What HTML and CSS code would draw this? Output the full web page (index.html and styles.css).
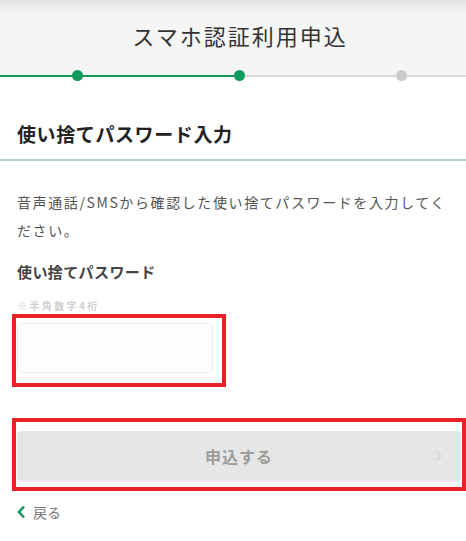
FILE: index.html
```html
<html>
  <head>
    <title>スマホ認証利用申込</title>
    <link rel="stylesheet" href="styles.css">
  </head>
  <body>
    <div class='top'>
      <h1 class='top-title'>スマホ認証利用申込</h1>
    </div>
    <div class='steps'>
      <span class='dot done'></span>
      <span class='dot done'></span>
      <span class='dot'></span>
    </div>

    <h2 class='section-title'>使い捨てパスワード入力</h2>

    <div class='content'>
      <p class='lead'>音声通話/SMSから確認した使い捨てパスワードを入力してください。</p>

      <div class='label'>使い捨てパスワード</div>
      <div class='hint'>※半角数字4桁</div>
      <div class='mark mark-input'>
        <input class='code' type='tel' maxlength='4' />
      </div>

      <div class='mark mark-button'>
        <button class='submit' disabled>
          申込する
          <svg class='submit-arrow' width='8' height='12' viewBox='0 0 8 12'>
            <polyline points='1.5,1.5 6,6 1.5,10.5' fill='none' stroke='#d2d2d2' stroke-width='1.4' />
          </svg>
        </button>
      </div>

      <a class='back' href='#'>
        <svg width='9' height='14' viewBox='0 0 9 14'>
          <polyline points='7,1.5 2,7 7,12.5' fill='none' stroke='#15995e' stroke-width='2.6' />
        </svg>
        戻る
      </a>
    </div>
  </body>
</html>
```

FILE: styles.css
```css
html {
  font-family: 'Noto Sans CJK JP', 'Noto Sans', sans-serif;
  background-color: #fff;
  color: #222;
}

body {
  margin: 0;
  overflow-x: hidden;
}

.top {
  height: 75px;
  background: linear-gradient(#e2e2e2, #f5f5f5 14px);
}

.top-title {
  margin: 0;
  padding-left: 14px;
  height: 70px;
  line-height: 70px;
  text-align: center;
  font-size: 22px;
  font-weight: 400;
  letter-spacing: 2px;
  color: #333;
}

.steps {
  position: relative;
  display: flex;
  gap: 151px;
  height: 11px;
  margin-top: -5px;
  padding-left: 72px;
}

.steps::before {
  content: '';
  position: absolute;
  left: 0;
  right: 0;
  top: 5px;
  height: 2px;
  background: linear-gradient(to right, #19995f 240px, #d8d8d8 240px);
}

.dot {
  position: relative;
  width: 11px;
  height: 11px;
  border-radius: 50%;
  background-color: #cbcbcb;
}

.dot.done {
  background-color: #0e9c5c;
}

.section-title {
  margin: 39px 0 0;
  padding: 0 17px 12px;
  font-size: 19px;
  line-height: 27px;
  letter-spacing: 0.6px;
  font-weight: 700;
  color: #222;
  border-bottom: 2px solid #a9d8c4;
}

.content {
  padding: 0 17px;
}

.lead {
  margin: 27px -8px 0 0;
  font-size: 14px;
  line-height: 28px;
  letter-spacing: 1.6px;
  color: #555;
}

.label {
  margin-top: 17px;
  font-size: 15px;
  line-height: 22px;
  font-weight: 700;
  letter-spacing: 0.4px;
  color: #444;
}

.hint {
  margin-top: 16px;
  font-size: 10px;
  line-height: 14px;
  font-weight: 700;
  letter-spacing: 2.4px;
  color: #cfcfcf;
}

.mark {
  border: 4px solid #ea2129;
  margin-left: -5px;
}

.mark-input {
  width: 196px;
  margin-top: 1px;
  padding: 5px 9px 10px 1px;
}

.code {
  display: block;
  width: 196px;
  height: 50px;
  box-sizing: border-box;
  border: 1px solid #ececec;
  border-radius: 5px;
  background-color: #fdfdfd;
}

.mark-button {
  margin-top: 31px;
  margin-right: -17px;
  padding: 9px 1px 6px;
}

.submit {
  position: relative;
  display: block;
  width: 100%;
  height: 50px;
  border: none;
  border-radius: 4px;
  background-color: #e6e6e6;
  box-shadow: 0 1px 1px rgba(0, 0, 0, 0.06);
  font-family: inherit;
  font-size: 16px;
  font-weight: 700;
  letter-spacing: 1px;
  color: #9b9b9b;
}

.submit-arrow {
  position: absolute;
  right: 18px;
  top: 19px;
}

.back {
  display: flex;
  align-items: center;
  gap: 7px;
  margin-top: 11px;
  font-size: 14px;
  line-height: 20px;
  color: #777;
  text-decoration: none;
}
```
